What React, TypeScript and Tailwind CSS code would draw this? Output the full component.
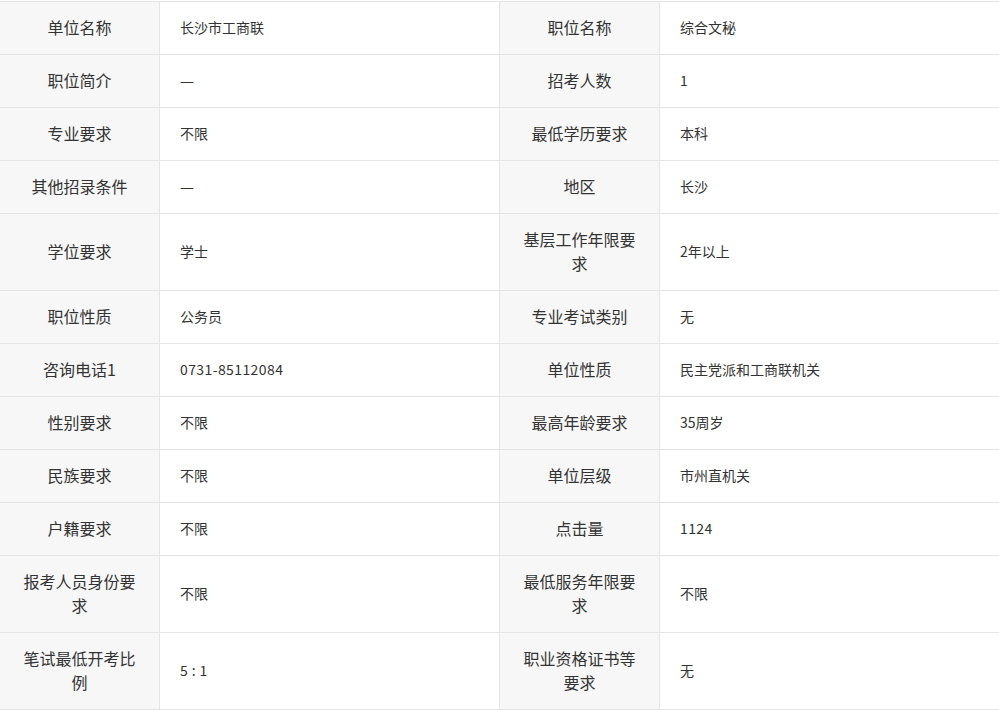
import React from "react";

// 职位信息行: [左标签, 左值, 右标签, 右值, 是否双行]
type Row = [string, string, string, string, boolean?];

const rows: Row[] = [
  ["单位名称", "长沙市工商联", "职位名称", "综合文秘"],
  ["职位简介", "—", "招考人数", "1"],
  ["专业要求", "不限", "最低学历要求", "本科"],
  ["其他招录条件", "—", "地区", "长沙"],
  ["学位要求", "学士", "基层工作年限要求", "2年以上", true],
  ["职位性质", "公务员", "专业考试类别", "无"],
  ["咨询电话1", "0731-85112084", "单位性质", "民主党派和工商联机关"],
  ["性别要求", "不限", "最高年龄要求", "35周岁"],
  ["民族要求", "不限", "单位层级", "市州直机关"],
  ["户籍要求", "不限", "点击量", "1124"],
  ["报考人员身份要求", "不限", "最低服务年限要求", "不限", true],
  ["笔试最低开考比例", "5 : 1", "职业资格证书等要求", "无", true],
];

const font = { fontFamily: '"Microsoft YaHei", "Noto Sans CJK SC", "Noto Sans", sans-serif' };

// 值单元格: 破折号用更宽的字形, 纯数字稍加字距
const Value = ({ text }: { text: string }) => {
  if (text === "—") return <span className="font-['DejaVu_Sans']">—</span>;
  if (/^[\d\s:\-]+$/.test(text)) return <span className="tracking-[0.4px]">{text}</span>;
  return <>{text}</>;
};

const App = () => {
  return (
    <div className="w-[999px] h-[711px] overflow-hidden bg-white" style={font}>
      <table className="-ml-px mt-px w-[1001px] table-fixed border-collapse">
        <colgroup>
          <col className="w-[160px]" />
          <col className="w-[340px]" />
          <col className="w-[160px]" />
          <col className="w-[341px]" />
        </colgroup>
        <tbody>
          {rows.map((r, i) => (
            <tr key={i} className={r[4] ? "h-[77px]" : "h-[53px]"}>
              <td className="border border-[#e5e5e5] bg-[#f7f7f7] px-5 pb-[2px] text-center align-middle text-[16px] leading-6 text-[#333]">
                {r[0]}
              </td>
              <td className="border border-[#e5e5e5] px-5 pb-[2px] align-middle text-[14px] leading-6 text-[#333]">
                <Value text={r[1]} />
              </td>
              <td className="border border-[#e5e5e5] bg-[#f7f7f7] px-5 pb-[2px] text-center align-middle text-[16px] leading-6 text-[#333]">
                {r[2]}
              </td>
              <td className="border border-[#e5e5e5] px-5 pb-[2px] align-middle text-[14px] leading-6 text-[#333]">
                <Value text={r[3]} />
              </td>
            </tr>
          ))}
        </tbody>
      </table>
    </div>
  );
};

export default App;
